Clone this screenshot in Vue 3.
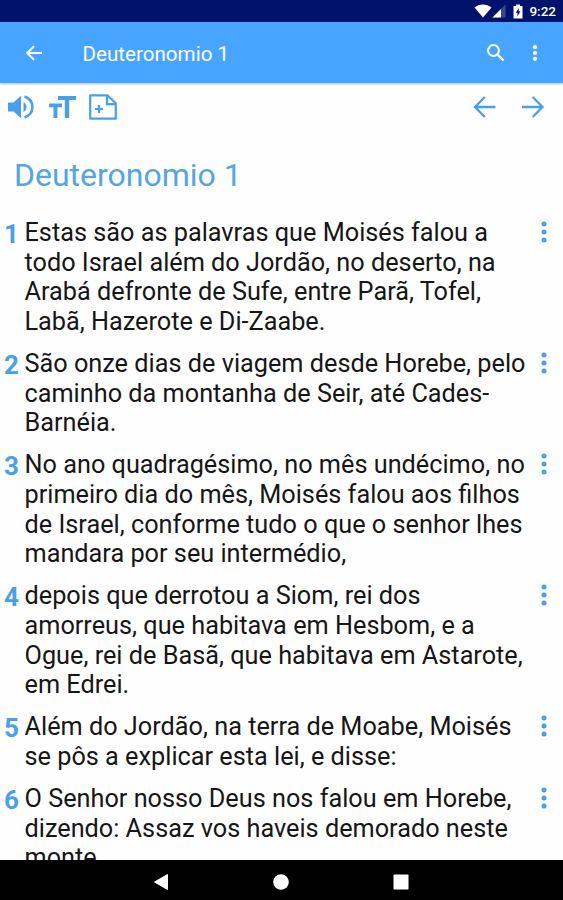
<script setup>
import { ref } from 'vue'

const title = ref('Deuteronomio 1')

const verses = ref([
  {
    id: 1,
    text: 'Estas são as palavras que Moisés falou a\ntodo Israel além do Jordão, no deserto, na\nArabá defronte de Sufe, entre Parã, Tofel,\nLabã, Hazerote e Di-Zaabe.'
  },
  {
    id: 2,
    text: 'São onze dias de viagem desde Horebe, pelo\ncaminho da montanha de Seir, até Cades-\nBarnéia.'
  },
  {
    id: 3,
    text: 'No ano quadragésimo, no mês undécimo, no\nprimeiro dia do mês, Moisés falou aos filhos\nde Israel, conforme tudo o que o senhor lhes\nmandara por seu intermédio,'
  },
  {
    id: 4,
    text: 'depois que derrotou a Siom, rei dos\namorreus, que habitava em Hesbom, e a\nOgue, rei de Basã, que habitava em Astarote,\nem Edrei.'
  },
  {
    id: 5,
    text: 'Além do Jordão, na terra de Moabe, Moisés\nse pôs a explicar esta lei, e disse:'
  },
  {
    id: 6,
    text: 'O Senhor nosso Deus nos falou em Horebe,\ndizendo: Assaz vos haveis demorado neste\nmonte.'
  }
])
</script>

<template>
  <div class="screen">
    <div class="status-bar">
      <svg class="wifi" width="18" height="14" viewBox="0 0 18 14">
        <path d="M0.5 3.6C5.2-.4 12.8-.4 17.5 3.6L9 13.6z" fill="#fff" />
      </svg>
      <svg class="signal" width="14" height="14" viewBox="0 0 14 14">
        <path d="M13.5 0.5v13H0.5z" fill="#3a4790" />
        <path d="M9 5v8.5H0.5z" fill="#fff" />
      </svg>
      <svg class="battery" width="10" height="15" viewBox="0 0 10 15">
        <path d="M3 0.5h4v1.500h2.500v12.500h-9V2H3z" fill="#fff" />
        <path d="M5.800 4L2.800 8.800h1.700V12.300l2.900-5H5.800z" fill="#00126b" />
      </svg>
      <span class="clock">9:22</span>
    </div>

    <header class="app-bar">
      <button class="icon-btn back" aria-label="Voltar">
        <svg width="24" height="24" viewBox="0 0 24 24">
          <path d="M20 12H5.500M12 5.200L5.200 12l6.800 6.800" fill="none" stroke="#fff" stroke-width="2" />
        </svg>
      </button>
      <h1 class="bar-title">{{ title }}</h1>
      <button class="icon-btn search" aria-label="Buscar">
        <svg width="24" height="24" viewBox="0 0 24 24">
          <circle cx="9.500" cy="9.500" r="5.400" fill="none" stroke="#fff" stroke-width="2" />
          <path d="M13.500 13.500l6 6" stroke="#fff" stroke-width="2.400" />
        </svg>
      </button>
      <button class="icon-btn" aria-label="Menu">
        <svg width="8" height="20" viewBox="0 0 8 20" fill="#fff">
          <circle cx="4" cy="4.200" r="2.100" />
          <circle cx="4" cy="10" r="2.100" />
          <circle cx="4" cy="15.800" r="2.100" />
        </svg>
      </button>
    </header>

    <div class="tools">
      <button class="icon-btn" aria-label="Ouvir">
        <svg width="28" height="26" viewBox="0 0 28 26">
          <path d="M1 8.500h5.500L14 1.800v22.400l-7.500-6.700H1z" fill="#48a0ea" />
          <path d="M16.500 8c4 2 4 8 0 10z" fill="#48a0ea" />
          <path d="M17.500 2.500c10.500 3.500 10.500 17.500 0 21" fill="none" stroke="#48a0ea" stroke-width="2.500" />
        </svg>
      </button>
      <button class="icon-btn text-size" aria-label="Tamanho do texto">
        <svg width="27" height="22" viewBox="0 0 27 22">
          <path d="M9 0h18v4h-6.800v18h-4.400V4H9z" fill="#48a0ea" />
          <path d="M0 7.500h13v3.700H8.400V22H4.500V11.200H0z" fill="#48a0ea" />
        </svg>
      </button>
      <button class="icon-btn note" aria-label="Nova nota">
        <svg width="28" height="26" viewBox="0 0 28 26" fill="none" stroke="#48a0ea" stroke-width="2.200">
          <path d="M1.200 1.300H18.500L26.800 9.300V24.700H1.200z" stroke-linejoin="round" />
          <path d="M18 1.300V10.200H26.800M10 11v8M6 15h8" />
        </svg>
      </button>
      <button class="icon-btn prev" aria-label="Capítulo anterior">
        <svg width="24" height="24" viewBox="0 0 24 24">
          <path d="M23.500 12H3.500M12.800 2L3 12l9.800 10" fill="none" stroke="#48a0ea" stroke-width="2.300" />
        </svg>
      </button>
      <button class="icon-btn" aria-label="Próximo capítulo">
        <svg width="24" height="24" viewBox="0 0 24 24">
          <path d="M1 12h20M11.700 2L21.500 12L11.700 22" fill="none" stroke="#48a0ea" stroke-width="2.300" />
        </svg>
      </button>
    </div>

    <main class="chapter">
      <h2 class="chapter-title">{{ title }}</h2>
      <div v-for="verse in verses" :key="verse.id" class="verse">
        <span class="number">{{ verse.id }}</span>
        <p class="text">{{ verse.text }}</p>
        <button class="icon-btn more" aria-label="Opções">
          <svg width="8" height="24" viewBox="0 0 8 24" fill="#48a0ea">
            <circle cx="4" cy="4" r="2.500" />
            <circle cx="4" cy="12" r="2.500" />
            <circle cx="4" cy="20" r="2.500" />
          </svg>
        </button>
      </div>
    </main>

    <nav class="nav-bar">
      <svg width="16" height="18" viewBox="0 0 16 18">
        <path d="M14.500 1.500v15L1.500 9z" fill="#fff" stroke="#fff" stroke-linejoin="round" />
      </svg>
      <svg width="16" height="16" viewBox="0 0 16 16">
        <circle cx="8" cy="8" r="7.800" fill="#fff" />
      </svg>
      <svg width="16" height="16" viewBox="0 0 16 16">
        <rect x="0.500" y="0.500" width="15" height="15" rx="0.800" fill="#fff" />
      </svg>
    </nav>
  </div>
</template>

<style>
body {
  margin: 0;
}
</style>

<style scoped>
.screen {
  display: flex;
  flex-direction: column;
  width: 563px;
  height: 900px;
  overflow: hidden;
  background: #fefefe;
  font-family: Roboto, "Liberation Sans", sans-serif;
}
.status-bar {
  display: flex;
  flex: none;
  align-items: center;
  justify-content: flex-end;
  box-sizing: border-box;
  height: 22px;
  padding-right: 7px;
  background: #00126b;
}
.battery {
  margin: 0 6px 0 7px;
}
.clock {
  color: #fff;
  font-size: 13.5px;
  font-weight: 500;
  line-height: 22px;
}
.icon-btn {
  display: flex;
  padding: 0;
  border: none;
  background: none;
  cursor: pointer;
}
.app-bar {
  display: flex;
  flex: none;
  align-items: center;
  box-sizing: border-box;
  height: 61px;
  padding: 0 24px 0 22px;
  background: #48a5ff;
  box-shadow: 0 1px 2px rgba(72, 130, 200, 0.5);
}
.bar-title {
  flex: 1;
  margin: 2px 0 0 36.5px;
  color: #fff;
  font-size: 20.6px;
  font-weight: 400;
}
.search {
  margin-right: 23px;
}
.tools {
  display: flex;
  flex: none;
  align-items: center;
  height: 48px;
  padding: 0 18px 1px 7px;
}
.text-size {
  margin-left: 14px;
}
.note {
  margin-left: 13px;
}
.prev {
  margin-left: auto;
  margin-right: 25px;
}
.chapter {
  flex: 1;
  min-height: 0;
  overflow: hidden;
}
.chapter-title {
  margin: 25px 0 24px 14px;
  color: #55a5e4;
  font-size: 32px;
  font-weight: 400;
  line-height: 37px;
}
.verse {
  display: flex;
  align-items: flex-start;
  margin-bottom: 12.2px;
}
.number {
  width: 20.5px;
  padding-left: 4px;
  color: #48a0ea;
  font-size: 26px;
  font-weight: 700;
  line-height: 33px;
}
.text {
  flex: 1;
  margin: 0;
  color: #161616;
  font-size: 25.27px;
  line-height: 29.7px;
  white-space: pre;
}
.more {
  margin: 2px 15px 0 0;
}
.nav-bar {
  display: flex;
  flex: none;
  align-items: center;
  justify-content: center;
  gap: 104px;
  height: 40px;
  padding: 4px 1px 0 0;
  box-sizing: border-box;
  background: #000;
}
</style>
